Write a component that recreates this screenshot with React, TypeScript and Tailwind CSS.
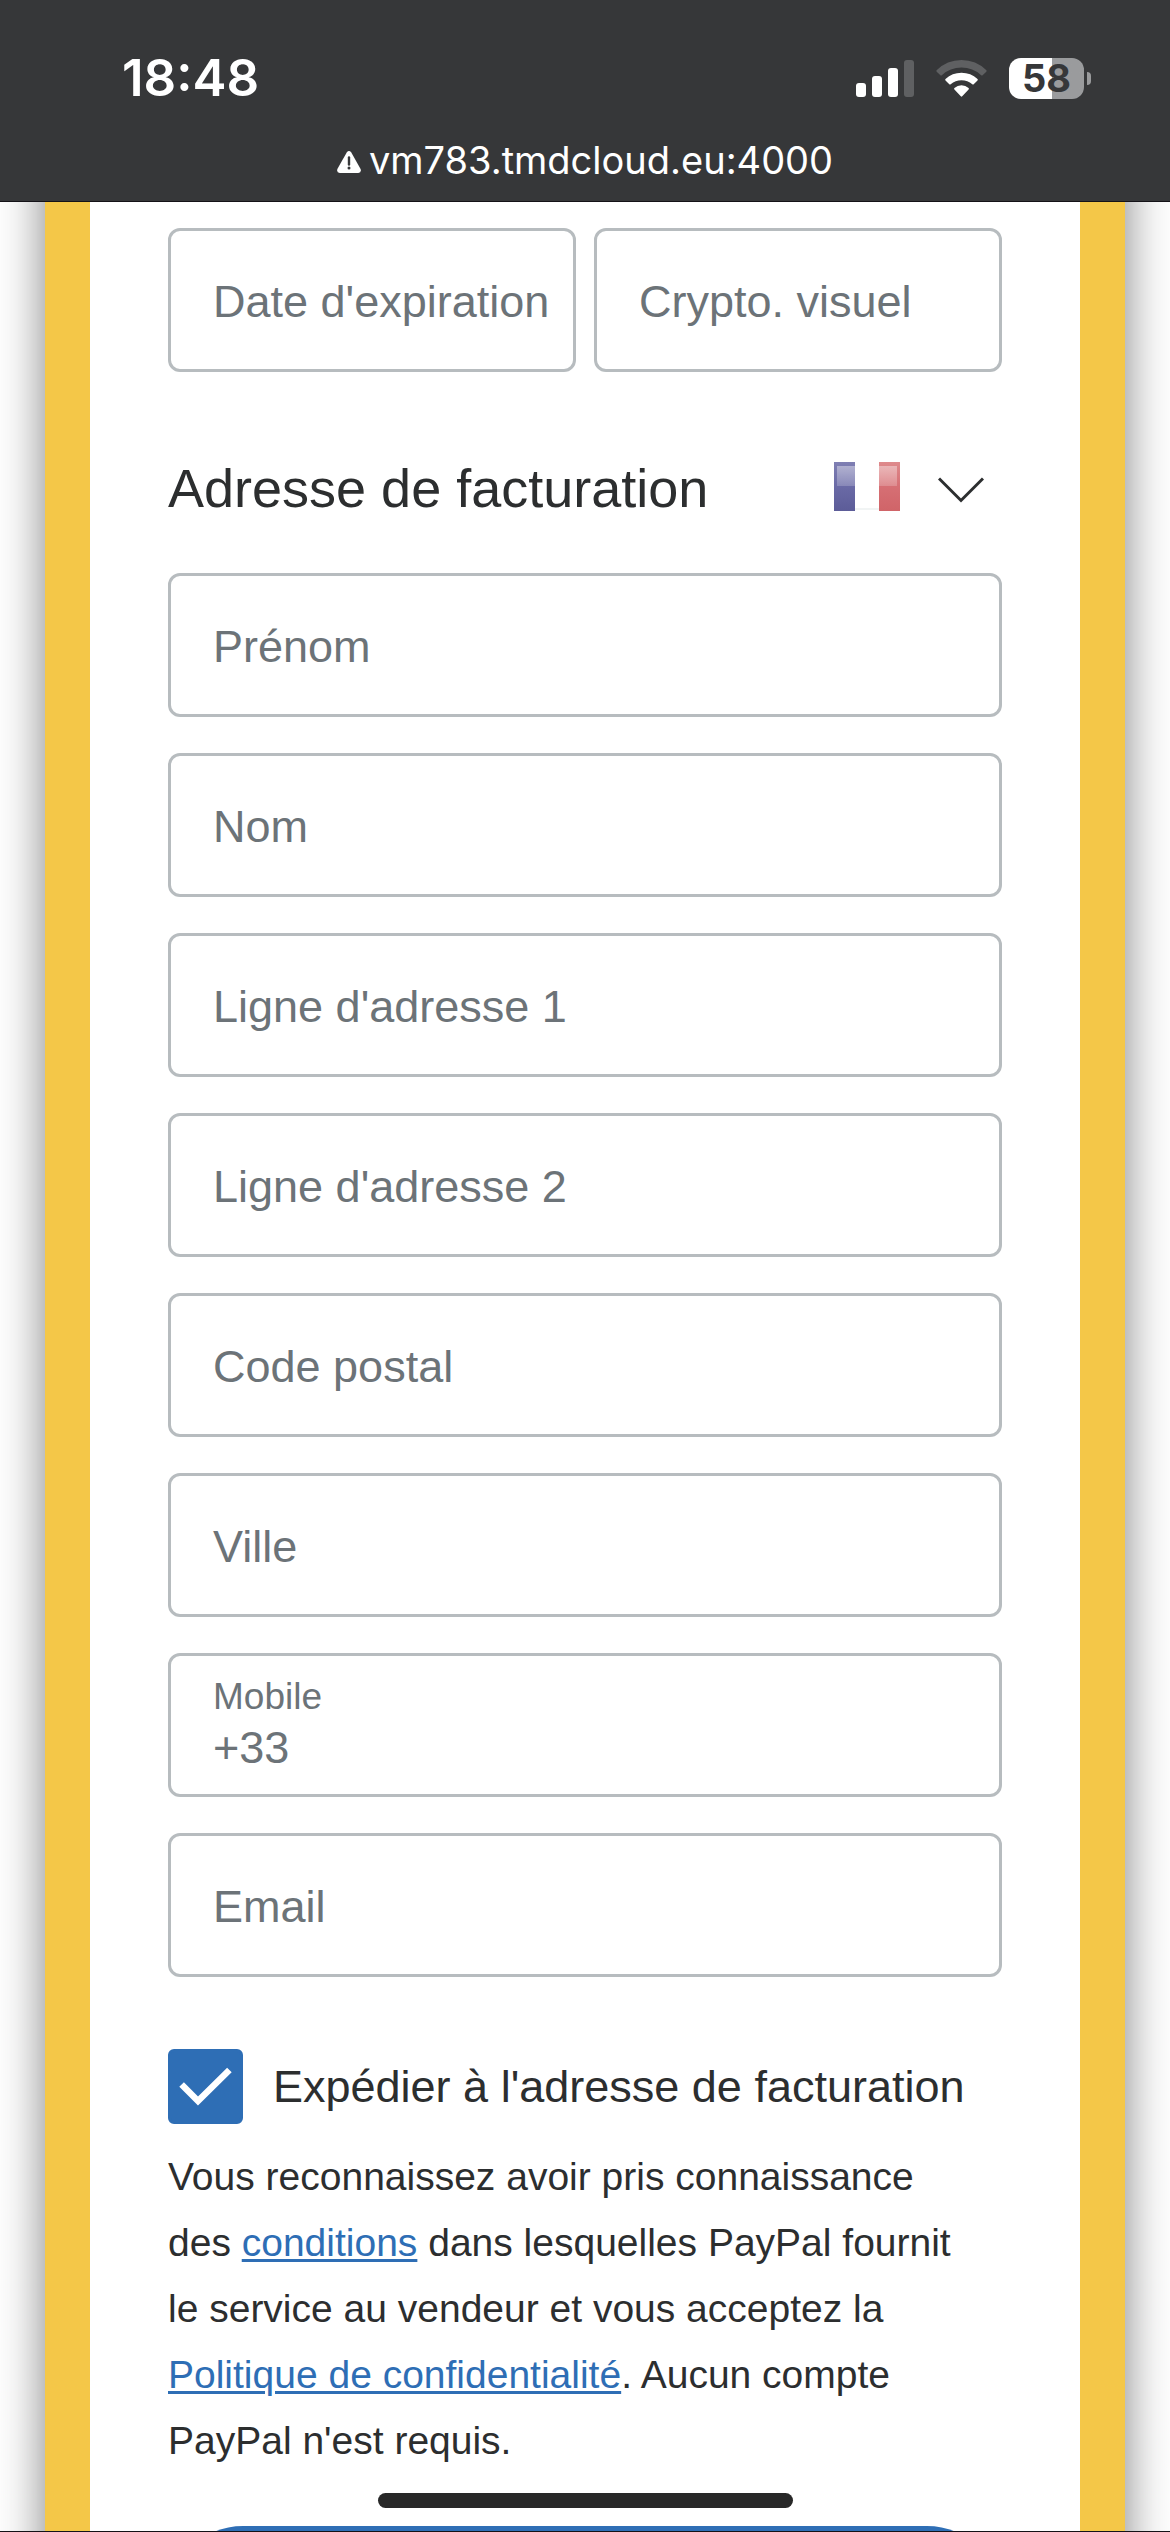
import { useState } from "react";

function Field({ label, type = "text" }: { label: string; type?: string }) {
  return (
    <label className="grid h-36 w-full min-w-0 rounded-xl border-3 border-[#b7bcbf] pt-1 pl-[42px] text-[45px] text-[#6c7378]">
      <span className="col-start-1 row-start-1 self-center whitespace-nowrap">{label}</span>
      <input
        type={type}
        className="col-start-1 row-start-1 w-full min-w-0 bg-transparent outline-none"
      />
    </label>
  );
}

function StatusIcons() {
  return (
    <div className="flex items-center gap-[22px]">
      <svg className="h-[37px] w-[58px]" viewBox="0 0 58 37" fill="#fff">
        <rect x="0" y="23" width="10" height="14" rx="3" />
        <rect x="16" y="16" width="10" height="21" rx="3" />
        <rect x="32" y="8" width="10" height="29" rx="3" />
        <rect x="48" y="0" width="10" height="37" rx="3" fill="#5f6062" />
      </svg>
      <svg className="h-[37px] w-[51px]" viewBox="0 0 51 37">
        <path
          d="M0.6 10.2Q0 11 .7 11.7L4.4 15.3Q5.1 15.9 5.8 15.2Q14.2 7.6 25.5 7.6Q36.8 7.6 45.2 15.2Q45.9 15.9 46.6 15.3L50.3 11.7Q51 11 50.4 10.2Q40 0 25.5 0Q11 0 .6 10.2Z"
          fill="#5f6062"
        />
        <path
          d="M9.5 18.9Q8.8 19.7 9.5 20.4L13.3 24.2Q14 24.9 14.7 24.2Q19.3 20.2 25.5 20.2Q31.7 20.2 36.3 24.2Q37 24.9 37.7 24.2L41.5 20.4Q42.2 19.7 41.5 18.9Q34.8 12.7 25.5 12.7Q16.2 12.7 9.5 18.9Z"
          fill="#fff"
        />
        <path
          d="M18.4 27.9Q17.7 28.7 18.4 29.4L24.8 36.3Q25.5 37 26.2 36.3L32.6 29.4Q33.3 28.7 32.6 27.9Q29.5 25.3 25.5 25.3Q21.5 25.3 18.4 27.9Z"
          fill="#fff"
        />
      </svg>
      <div className="flex items-center gap-[3px]">
        <div className="flex h-[41px] w-[75px] items-center justify-center rounded-xl bg-linear-to-r from-white from-57% to-[#9a9b9d] to-57% text-[38px] leading-none font-bold text-[#363739]">
          58
        </div>
        <div className="h-[13px] w-1 rounded-r-full bg-[#9a9b9d]" />
      </div>
    </div>
  );
}

function BrowserBar() {
  return (
    <header className="z-10 h-[202px] shrink-0 border-b border-[#141217] bg-[#363739] pt-[47px] font-['Inter',sans-serif] text-white">
      <div className="flex h-[62px] items-center justify-between pr-[79px] pl-[122px]">
        <span className="text-[51px] font-semibold">18:48</span>
        <StatusIcons />
      </div>
      <div className="mt-[27px] flex items-center justify-center gap-2 text-[38px] leading-12">
        <svg className="mt-1 h-[22px] w-6" viewBox="0 0 24 22">
          <path
            d="M9.7 1.4Q12-1.3 14.3 1.4L23.6 18Q24.6 21.6 21.3 22H2.7Q-.6 21.6 .4 18Z"
            fill="#fff"
          />
          <path d="M12 6.5V13.5" stroke="#363739" strokeWidth="2.4" strokeLinecap="round" />
          <circle cx="12" cy="17" r="1.5" fill="#363739" />
        </svg>
        <span>vm783.tmdcloud.eu:4000</span>
      </div>
    </header>
  );
}

function FrenchFlag() {
  return (
    <svg className="mb-1 h-[49px] w-[66px]" viewBox="0 0 66 49">
      <defs>
        <linearGradient id="flagBlue" x1="0" y1="0" x2="0" y2="1">
          <stop offset="0" stopColor="#7f7fb3" />
          <stop offset=".5" stopColor="#6a6aa6" />
          <stop offset="1" stopColor="#5c5c98" />
        </linearGradient>
        <linearGradient id="flagRed" x1="0" y1="0" x2="0" y2="1">
          <stop offset="0" stopColor="#de8a8c" />
          <stop offset=".5" stopColor="#d66f74" />
          <stop offset="1" stopColor="#d06468" />
        </linearGradient>
        <linearGradient id="flagGloss" x1="0" y1="0" x2="0" y2="1">
          <stop offset="0" stopColor="#fff" stopOpacity=".4" />
          <stop offset="1" stopColor="#fff" stopOpacity=".2" />
        </linearGradient>
      </defs>
      <rect width="21" height="49" fill="url(#flagBlue)" />
      <rect x="21" y="46" width="24" height="2" fill="#f1f4f4" />
      <rect x="45" width="21" height="49" fill="url(#flagRed)" />
      <rect x="3" y="4" width="18" height="20" fill="url(#flagGloss)" />
      <rect x="45" y="4" width="18" height="20" fill="url(#flagGloss)" />
    </svg>
  );
}

export default function App() {
  const [sameAddress, setSameAddress] = useState(true);
  const [mobile, setMobile] = useState("+33");

  return (
    <div className="relative flex h-screen flex-col overflow-hidden bg-white font-['Liberation_Sans',Arial,sans-serif] text-[#2c2e2f]">
      <BrowserBar />
      {/* the card runs under the browser bar and past the bottom edge */}
      <main className="mx-[45px] -mt-12 -mb-12 flex-1 border-x-45 border-[#f4c748] bg-white px-[78px] pt-[74px] shadow-[0_0_45px_rgba(0,0,0,0.5)]">
        <form>
          <div className="flex gap-[18px]">
            <Field label="Date d'expiration" />
            <Field label="Crypto. visuel" />
          </div>

          <div className="mt-20 mb-[49px] flex h-18 items-center justify-between pr-[18px]">
            <h2 id="billing" className="text-[54px]">Adresse de facturation</h2>
            <div className="relative flex items-center gap-[38px]">
              <FrenchFlag />
              <svg
                className="mt-1 h-[26px] w-[46px]"
                viewBox="0 0 46 26"
                fill="none"
                stroke="#2c2e2f"
                strokeWidth="3"
              >
                <path d="M1 1.5L23 23.5L45 1.5" />
              </svg>
              <select aria-labelledby="billing" className="absolute inset-0 opacity-0">
                <option>FR</option>
              </select>
            </div>
          </div>

          <div className="flex flex-col gap-9">
            <Field label="Prénom" />
            <Field label="Nom" />
            <Field label="Ligne d'adresse 1" />
            <Field label="Ligne d'adresse 2" />
            <Field label="Code postal" />
            <Field label="Ville" />
            <label className="flex h-36 flex-col rounded-xl border-3 border-[#b7bcbf] pt-5 pl-[42px] text-[#6c7378]">
              <span className="text-[37px] leading-[42px]">Mobile</span>
              <input
                type="tel"
                value={mobile}
                onChange={(e) => setMobile(e.target.value)}
                className="h-15 w-full bg-transparent text-[45px] outline-none"
              />
            </label>
            <Field label="Email" type="email" />
          </div>

          <label className="mt-18 flex items-center gap-[30px] text-[45px]">
            <span className="grid size-[75px] shrink-0">
              <input
                type="checkbox"
                checked={sameAddress}
                onChange={(e) => setSameAddress(e.target.checked)}
                className="col-start-1 row-start-1 size-full appearance-none rounded-md border-3 border-[#b7bcbf] checked:border-[#2e6eb5] checked:bg-[#2e6eb5]"
              />
              {sameAddress && (
                <svg
                  className="pointer-events-none z-10 col-start-1 row-start-1"
                  viewBox="0 0 75 75"
                  fill="none"
                  stroke="#fff"
                  strokeWidth="6.5"
                >
                  <path d="M13.6 35.5L30 52L61.4 21" />
                </svg>
              )}
            </span>
            <span className="whitespace-nowrap">Expédier à l'adresse de facturation</span>
          </label>

          <p className="mt-5 text-[39px] leading-[66px]">
            Vous reconnaissez avoir pris connaissance
            <br />
            des{" "}
            <a href="#" className="text-[#2e6eb5] underline decoration-3 underline-offset-[3px]">
              conditions
            </a>{" "}
            dans lesquelles PayPal fournit
            <br />
            le service au vendeur et vous acceptez la
            <br />
            <a href="#" className="text-[#2e6eb5] underline decoration-3 underline-offset-[3px]">
              Politique de confidentialité
            </a>
            . Aucun compte
            <br />
            PayPal n'est requis.
          </p>

          <button
            type="submit"
            aria-labelledby="billing"
            className="mt-[52px] h-[150px] w-full rounded-full bg-[#2e6eb5]"
          />
        </form>
      </main>

      {/* home indicator and bottom hairline */}
      <div className="absolute inset-x-0 bottom-0 flex flex-col items-center">
        <div className="mb-[23px] h-[15px] w-[415px] rounded-full bg-[#282828]" />
        <div className="h-px w-full bg-[#141217]" />
      </div>
    </div>
  );
}
